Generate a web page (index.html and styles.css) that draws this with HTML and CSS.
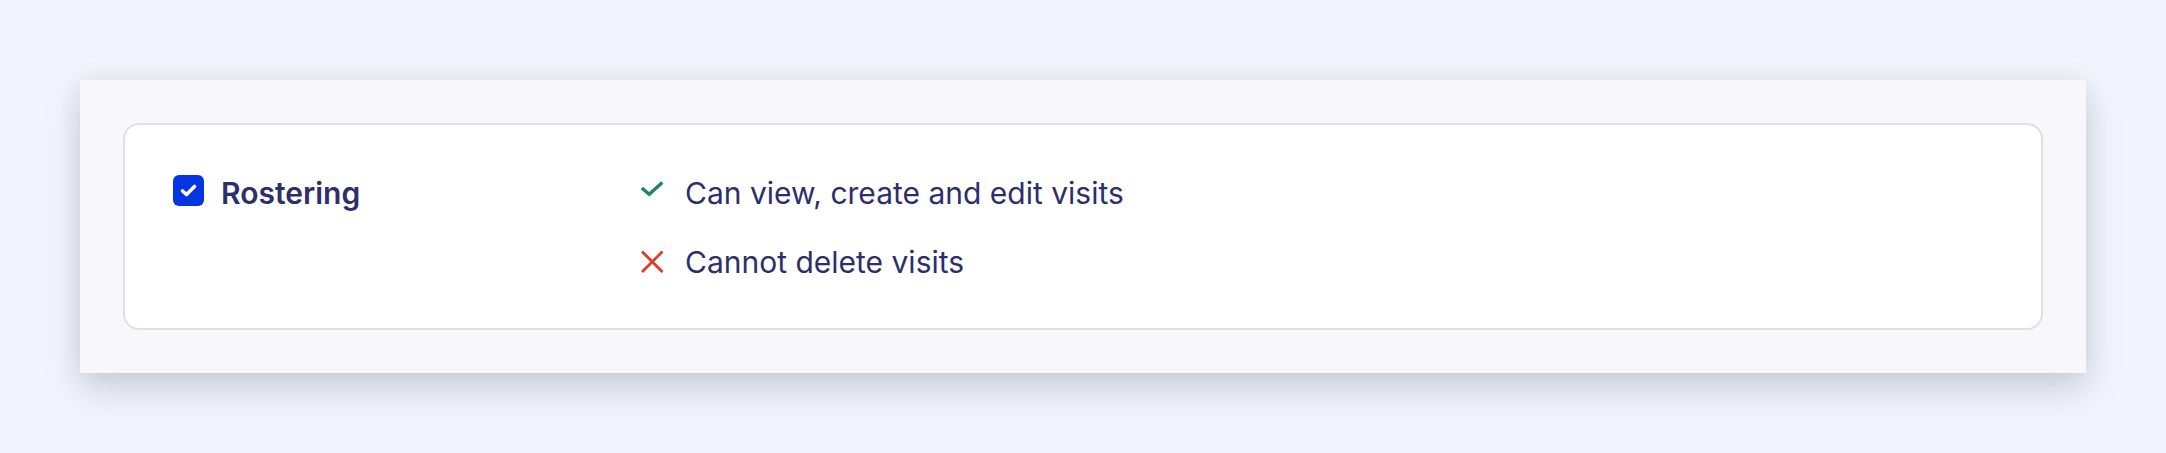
FILE: index.html
```html
<!DOCTYPE html>
<html lang="en">
<head>
<meta charset="utf-8">
<title>Permissions</title>
<link rel="stylesheet" href="styles.css">
</head>
<body>
<main class="page">
  <section class="panel">
    <div class="card">
      <div class="module">
        <span class="checkbox" role="checkbox" aria-checked="true">
          <svg viewBox="0 0 31 31" width="31" height="31" aria-hidden="true">
            <polyline points="9.5,16 13.5,19.5 21.5,11.5" fill="none" stroke="#fff" stroke-width="3.6" stroke-linecap="round" stroke-linejoin="round"/>
          </svg>
        </span>
        <span class="module-name">Rostering</span>
      </div>
      <ul class="perms">
        <li class="perm">
          <svg class="icon" viewBox="0 0 24 24" width="24" height="24" aria-hidden="true">
            <polyline points="1.8,7 9.2,13.3 22.3,1.5" fill="none" stroke="#1f8460" stroke-width="3.4"/>
          </svg>
          <span>Can view, create and edit visits</span>
        </li>
        <li class="perm">
          <svg class="icon" viewBox="0 0 24 24" width="24" height="24" aria-hidden="true">
            <path d="M2 1.5 L22.5 22 M22.5 1.5 L2 22" fill="none" stroke="#e03b27" stroke-width="2.8"/>
          </svg>
          <span>Cannot delete visits</span>
        </li>
      </ul>
    </div>
  </section>
</main>
</body>
</html>
```

FILE: styles.css
```css
* { box-sizing: border-box; }

html, body {
  margin: 0;
  padding: 0;
  background: #f2f5fd;
}

body {
  font-family: Inter, "Noto Sans", "Liberation Sans", sans-serif;
  color: #2d2f6c;
}

.page {
  padding: 80px;
}

.panel {
  background: #f8f8fa;
  padding: 43px;
  box-shadow: 0 16px 34px rgba(25, 25, 55, 0.17), 0 0 24px rgba(25, 25, 70, 0.06);
}

.card {
  background: #ffffff;
  border: 2px solid #e0dfe9;
  border-radius: 16px;
  padding: 48px 48px 46px;
  display: flex;
  align-items: flex-start;
}

.module {
  width: 467px;
  display: flex;
  align-items: flex-start;
  gap: 17px;
  height: 40px;
}

.checkbox {
  width: 31px;
  height: 31px;
  margin-top: 2px;
  border-radius: 6px;
  background: #0434e3;
  display: flex;
  flex: none;
}

.module-name {
  font-size: 30px;
  line-height: 40px;
  font-weight: 600;
}

.perms {
  list-style: none;
  margin: 0;
  padding: 0;
  display: flex;
  flex-direction: column;
  gap: 29px;
}

.perm {
  display: flex;
  align-items: center;
  gap: 21px;
  font-size: 30px;
  line-height: 40px;
}

.perm:first-child .icon {
  align-self: flex-start;
  margin-top: 8px;
}

.icon {
  flex: none;
  display: block;
}
```
